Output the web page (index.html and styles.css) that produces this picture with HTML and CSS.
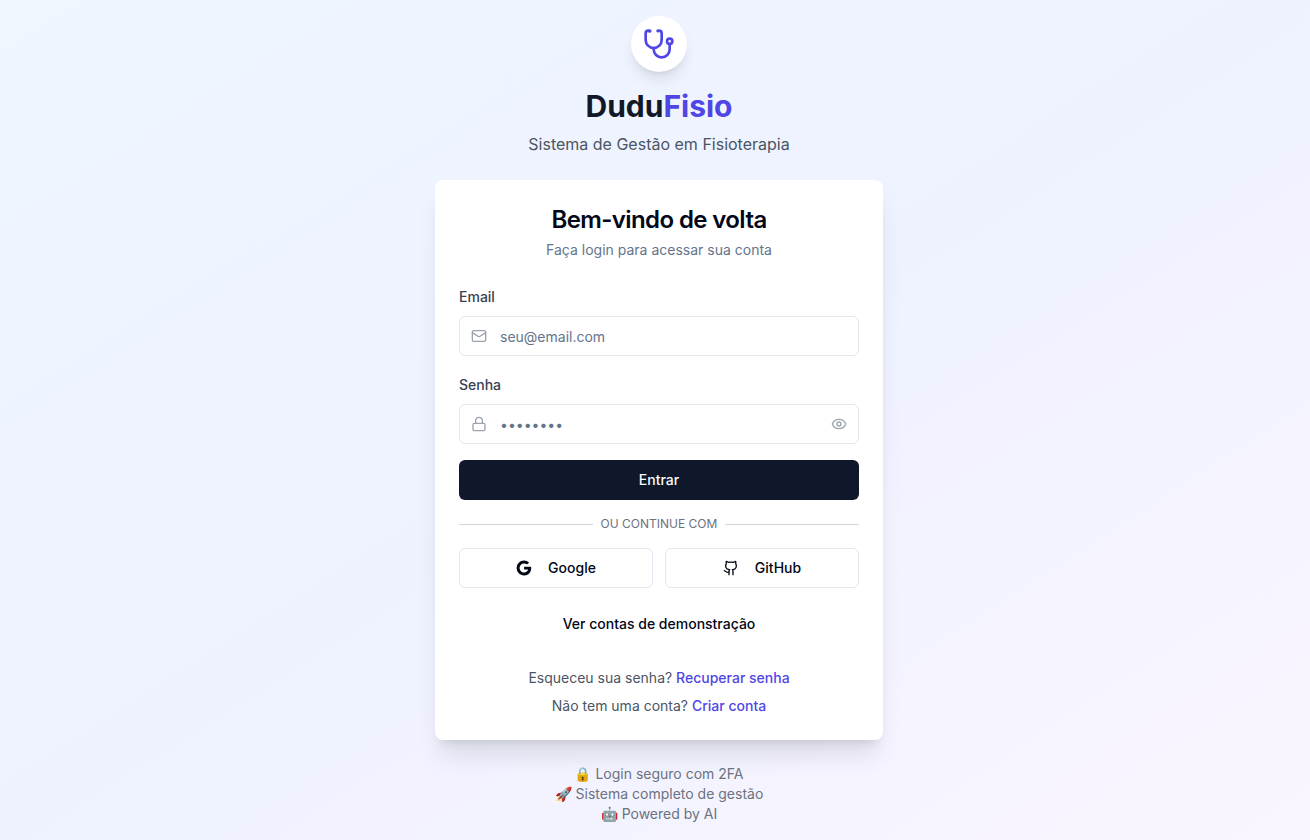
FILE: index.html
```html
<!DOCTYPE html>
<html lang="pt-BR">
<head>
<meta charset="utf-8">
<meta name="viewport" content="width=device-width, initial-scale=1">
<title>DuduFisio</title>
<link rel="stylesheet" href="styles.css">
</head>
<body>
<main class="page">
  <div class="login">
    <header class="brand">
      <div class="brand-logo">
        <svg class="icon icon-lg" viewBox="0 0 24 24" aria-hidden="true">
          <path d="M4.8 2.3A.3.3 0 1 0 5 2H4a2 2 0 0 0-2 2v5a6 6 0 0 0 6 6 6 6 0 0 0 6-6V4a2 2 0 0 0-2-2h-1a.2.2 0 1 0 .3.3"/>
          <path d="M8 15v1a6 6 0 0 0 6 6 6 6 0 0 0 6-6v-4"/>
          <circle cx="20" cy="10" r="2"/>
        </svg>
      </div>
      <h1 class="brand-name">Dudu<span class="accent">Fisio</span></h1>
      <p class="brand-tagline">Sistema de Gestão em Fisioterapia</p>
    </header>

    <section class="card">
      <div class="card-header">
        <h2 class="card-title">Bem-vindo de volta</h2>
        <p class="card-description">Faça login para acessar sua conta</p>
      </div>

      <form class="form">
        <div class="field">
          <div><label class="label" for="email">Email</label></div>
          <div class="control">
            <svg class="icon control-icon" viewBox="0 0 24 24" aria-hidden="true">
              <rect width="20" height="16" x="2" y="4" rx="2"/>
              <path d="m22 7-8.97 5.7a1.94 1.94 0 0 1-2.06 0L2 7"/>
            </svg>
            <input class="input" id="email" type="email" placeholder="seu@email.com">
          </div>
        </div>
        <div class="field">
          <div><label class="label" for="senha">Senha</label></div>
          <div class="control">
            <svg class="icon control-icon" viewBox="0 0 24 24" aria-hidden="true">
              <rect width="18" height="11" x="3" y="11" rx="2"/>
              <path d="M7 11V7a5 5 0 0 1 10 0v4"/>
            </svg>
            <input class="input" id="senha" type="password" placeholder="••••••••">
            <button class="reveal" type="button" aria-label="Mostrar senha">
              <svg class="icon" viewBox="0 0 24 24" aria-hidden="true">
                <path d="M2.06 12.35a1 1 0 0 1 0-.7 10.75 10.75 0 0 1 19.88 0 1 1 0 0 1 0 .7 10.75 10.75 0 0 1-19.88 0"/>
                <circle cx="12" cy="12" r="3"/>
              </svg>
            </button>
          </div>
        </div>
        <button class="button button-primary" type="submit">Entrar</button>
      </form>

      <div class="divider">Ou continue com</div>

      <div class="providers">
        <button class="button button-outline" type="button">
          <svg class="icon icon-solid" viewBox="1.6 1.2 21.6 21.6" aria-hidden="true">
            <path d="M12.545 10.239v3.821h5.445c-.712 2.315-2.647 3.972-5.445 3.972a6.033 6.033 0 1 1 0-12.064c1.498 0 2.866.549 3.921 1.453l2.814-2.814A9.969 9.969 0 0 0 12.545 2C7.021 2 2.543 6.477 2.543 12s4.478 10 10.002 10c8.396 0 10.249-7.85 9.426-11.748z"/>
          </svg>
          Google
        </button>
        <button class="button button-outline" type="button">
          <svg class="icon" viewBox="0 0 24 24" aria-hidden="true">
            <path d="M15 22v-4a4.8 4.8 0 0 0-1-3.5c3 0 6-2 6-5.5.08-1.25-.27-2.48-1-3.5.28-1.15.28-2.35 0-3.5 0 0-1 0-3 1.5-2.64-.5-5.36-.5-8 0C6 2 5 2 5 2c-.3 1.15-.3 2.35 0 3.5A5.403 5.403 0 0 0 4 9c0 3.5 3 5.5 6 5.5-.39.49-.68 1.05-.85 1.65-.17.6-.22 1.23-.15 1.85v4"/>
            <path d="M9 18c-4.51 2-5-2-7-2"/>
          </svg>
          GitHub
        </button>
      </div>

      <button class="button button-ghost" type="button">Ver contas de demonstração</button>

      <div class="links">
        <p>Esqueceu sua senha? <a class="link" href="#recuperar">Recuperar senha</a></p>
        <p>Não tem uma conta? <a class="link" href="#criar">Criar conta</a></p>
      </div>
    </section>

    <footer class="notes">
      <p>🔒 Login seguro com 2FA</p>
      <p>🚀 Sistema completo de gestão</p>
      <p>🤖 Powered by AI</p>
    </footer>
  </div>
</main>
</body>
</html>
```
FILE: styles.css
```css
*, *::before, *::after { box-sizing: border-box; }

body, h1, h2, p { margin: 0; }

body {
  font-family: Inter, "Liberation Sans", sans-serif;
  font-size: 16px;
  line-height: 24px;
  color: #020817;
}

button, input { font: inherit; color: inherit; }

.page {
  min-height: 100vh;
  display: flex;
  align-items: center;
  justify-content: center;
  padding: 16px 16px 16px 24px;
  background: linear-gradient(to bottom right, #eff6ff, #eef2ff, #faf5ff);
}

.login {
  width: 100%;
  max-width: 448px;
  display: flex;
  flex-direction: column;
  gap: 24px;
}

.brand {
  display: flex;
  flex-direction: column;
  align-items: center;
  text-align: center;
}

.brand-logo {
  display: flex;
  padding: 12px;
  margin-bottom: 16px;
  border-radius: 50%;
  background: #fff;
  color: #4f46e5;
  box-shadow: 0 10px 15px -3px rgb(0 0 0 / 0.1), 0 4px 6px -4px rgb(0 0 0 / 0.1);
}

.brand-name {
  margin-bottom: 8px;
  font-size: 30px;
  line-height: 36px;
  font-weight: 700;
  color: #111827;
}

.accent { color: #4f46e5; }

.brand-tagline { color: #4b5563; }

.icon {
  width: 16px;
  height: 16px;
  flex: none;
  fill: none;
  stroke: currentColor;
  stroke-width: 2;
  stroke-linecap: round;
  stroke-linejoin: round;
}

.icon-lg { width: 32px; height: 32px; }

.icon-solid { fill: currentColor; stroke: none; }

.card {
  display: flex;
  flex-direction: column;
  gap: 16px;
  padding: 24px;
  border-radius: 8px;
  background: #fff;
  box-shadow: 0 20px 25px -5px rgb(0 0 0 / 0.1), 0 8px 10px -6px rgb(0 0 0 / 0.1);
}

.card-header {
  display: flex;
  flex-direction: column;
  gap: 4px;
  padding-bottom: 8px;
  text-align: center;
}

.card-title {
  font-size: 24px;
  line-height: 32px;
  font-weight: 600;
  letter-spacing: -0.025em;
}

.card-description {
  font-size: 14px;
  line-height: 20px;
  color: #64748b;
}

.form {
  display: flex;
  flex-direction: column;
  gap: 16px;
}

.field {
  display: flex;
  flex-direction: column;
  gap: 8px;
}

.label {
  font-size: 14px;
  line-height: 20px;
  font-weight: 500;
  color: #374151;
}

.control {
  display: flex;
  align-items: center;
  height: 40px;
  padding: 0 11px;
  border: 1px solid #e2e8f0;
  border-radius: 6px;
  color: #9ca3af;
}

.control:focus-within { border-color: #4f46e5; }

.input {
  flex: 1;
  min-width: 0;
  height: 100%;
  padding: 0 13px;
  border: 0;
  outline: 0;
  background: none;
  font-size: 14px;
  line-height: 20px;
  color: #020817;
}

.input::placeholder { color: #64748b; opacity: 1; }

.reveal {
  display: flex;
  padding: 0;
  border: 0;
  background: none;
  cursor: pointer;
}

.button {
  display: flex;
  align-items: center;
  justify-content: center;
  gap: 16px;
  width: 100%;
  height: 40px;
  padding: 0 16px;
  border: 0;
  border-radius: 6px;
  background: none;
  font-size: 14px;
  line-height: 20px;
  font-weight: 500;
  cursor: pointer;
}

.button-primary { background: #0f172a; color: #f8fafc; }

.button-outline { border: 1px solid #e2e8f0; background: #fff; }

.divider {
  display: flex;
  align-items: center;
  gap: 8px;
  font-size: 12px;
  line-height: 16px;
  text-transform: uppercase;
  color: #6b7280;
}

.divider::before,
.divider::after {
  content: "";
  flex: 1;
  border-top: 1px solid #d1d5db;
}

.providers {
  display: grid;
  grid-template-columns: 1fr 1fr;
  gap: 12px;
}

.links {
  display: flex;
  flex-direction: column;
  gap: 8px;
  padding-top: 8px;
  font-size: 14px;
  line-height: 20px;
  text-align: center;
  color: #4b5563;
}

.link {
  font-weight: 500;
  color: #4f46e5;
  text-decoration: none;
}

.notes {
  font-size: 14px;
  line-height: 20px;
  text-align: center;
  color: #6b7280;
}
```
